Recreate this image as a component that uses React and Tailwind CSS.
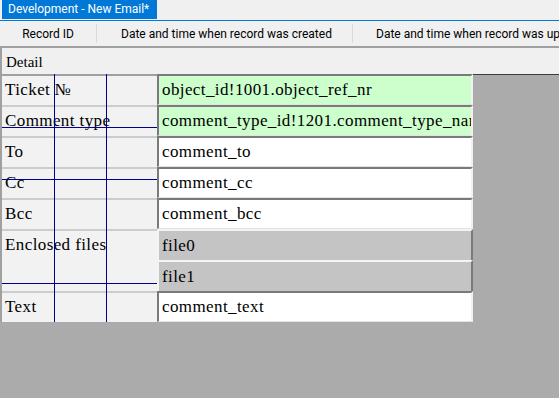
import React from 'react';

const serif = "font-['Liberation_Serif','Times_New_Roman',serif]";
const ui = "font-['Roboto','Noto_Sans',sans-serif]";

const fields = [
  { label: 'Ticket №', value: 'object_id!1001.object_ref_nr', bg: 'bg-[#ccffcc]' },
  { label: 'Comment type', value: 'comment_type_id!1201.comment_type_name', bg: 'bg-[#ccffcc]' },
  { label: 'To', value: 'comment_to', bg: 'bg-white' },
  { label: 'Cc', value: 'comment_cc', bg: 'bg-white' },
  { label: 'Bcc', value: 'comment_bcc', bg: 'bg-white' },
];

function Field({ value, bg }) {
  return (
    <div className={`h-[31px] flex items-center overflow-hidden whitespace-nowrap border-t-2 border-l-2 border-b border-r-2 border-t-[#7a7a7a] border-l-[#7a7a7a] border-b-[#e3e3e3] border-r-[#f0f0f0] pl-[3px] ${bg}`}>
      {value}
    </div>
  );
}

function FileCell({ value }) {
  return (
    <div className="h-[31px] flex items-center overflow-hidden whitespace-nowrap border-t-2 border-l-2 border-r-2 border-t-[#f4f4f4] border-l-[#f4f4f4] border-r-[#7a7a7a] bg-[#c4c4c4] pl-[3px]">
      {value}
    </div>
  );
}

function Label({ text, tall, first }) {
  return (
    <div className={`${tall ? 'h-[62px]' : 'h-[31px]'} border-t-2 ${first ? 'border-t-[#a0a0a0]' : 'border-t-[#cccccc]'} bg-[#f2f2f2] pl-[3px] pt-[1px] whitespace-nowrap`}>
      {text}
    </div>
  );
}

export default function App() {
  return (
    <div className="w-[559px] h-[398px] overflow-hidden flex flex-col bg-[#ababab]">
      {/* tab strip */}
      <div className={`h-[20px] bg-[#f0f0f0] flex pl-[2px] ${ui}`}>
        <div className="w-[155px] h-[19px] bg-[#0078d7] text-white text-[12px] leading-[19px] pl-[6px] whitespace-nowrap overflow-hidden">
          Development - New Email*
        </div>
      </div>
      <div className="h-px bg-[#0078d7]" />

      {/* column header */}
      <div className={`h-[27px] flex items-center bg-[#f0f0f0] border-b-2 border-[#a0a0a0] text-[12px] text-black whitespace-nowrap overflow-hidden ${ui}`}>
        <div className="w-[96px] shrink-0 text-center">Record ID</div>
        <div className="w-px h-[19px] shrink-0 bg-[#d9d9d9]" />
        <div className="w-[255px] shrink-0 pl-[24px]">Date and time when record was created</div>
        <div className="w-px h-[19px] shrink-0 bg-[#d9d9d9]" />
        <div className="pl-[23px] shrink-0">Date and time when record was updated</div>
      </div>

      {/* detail band */}
      <div className={`h-[26px] bg-[#f0f0f0] border-l-2 border-[#a0a0a0] pl-[4px] pt-[3px] text-[15px] text-black ${serif}`}>
        Detail
      </div>

      {/* form */}
      <div className={`flex text-[17px] tracking-[0.4px] text-black ${serif}`}>
        <div className="relative w-[473px] flex border-l-2 border-[#a0a0a0]">
          <div className="w-[155px] flex flex-col">
            {fields.map((f, i) => (
              <Label key={f.label} text={f.label} first={i === 0} />
            ))}
            <Label text="Enclosed files" tall />
            <Label text="Text" />
          </div>
          <div className="w-[316px] flex flex-col">
            {fields.map((f) => (
              <Field key={f.label} value={f.value} bg={f.bg} />
            ))}
            <FileCell value="file0" />
            <FileCell value="file1" />
            <Field value="comment_text" bg="bg-white" />
          </div>

          {/* guide lines */}
          <div className="absolute left-[52px] top-0 bottom-0 w-px bg-[#00008b]" />
          <div className="absolute left-[104px] top-0 bottom-0 w-px bg-[#00008b]" />
          <div className="absolute left-0 top-[53px] w-[155px] h-px bg-[#00008b]" />
          <div className="absolute left-0 top-[105px] w-[155px] h-px bg-[#00008b]" />
          <div className="absolute left-0 top-[209px] w-[155px] h-px bg-[#00008b]" />
        </div>
        <div className="flex-1 border-t border-[#3c3c3c]" />
      </div>
    </div>
  );
}
